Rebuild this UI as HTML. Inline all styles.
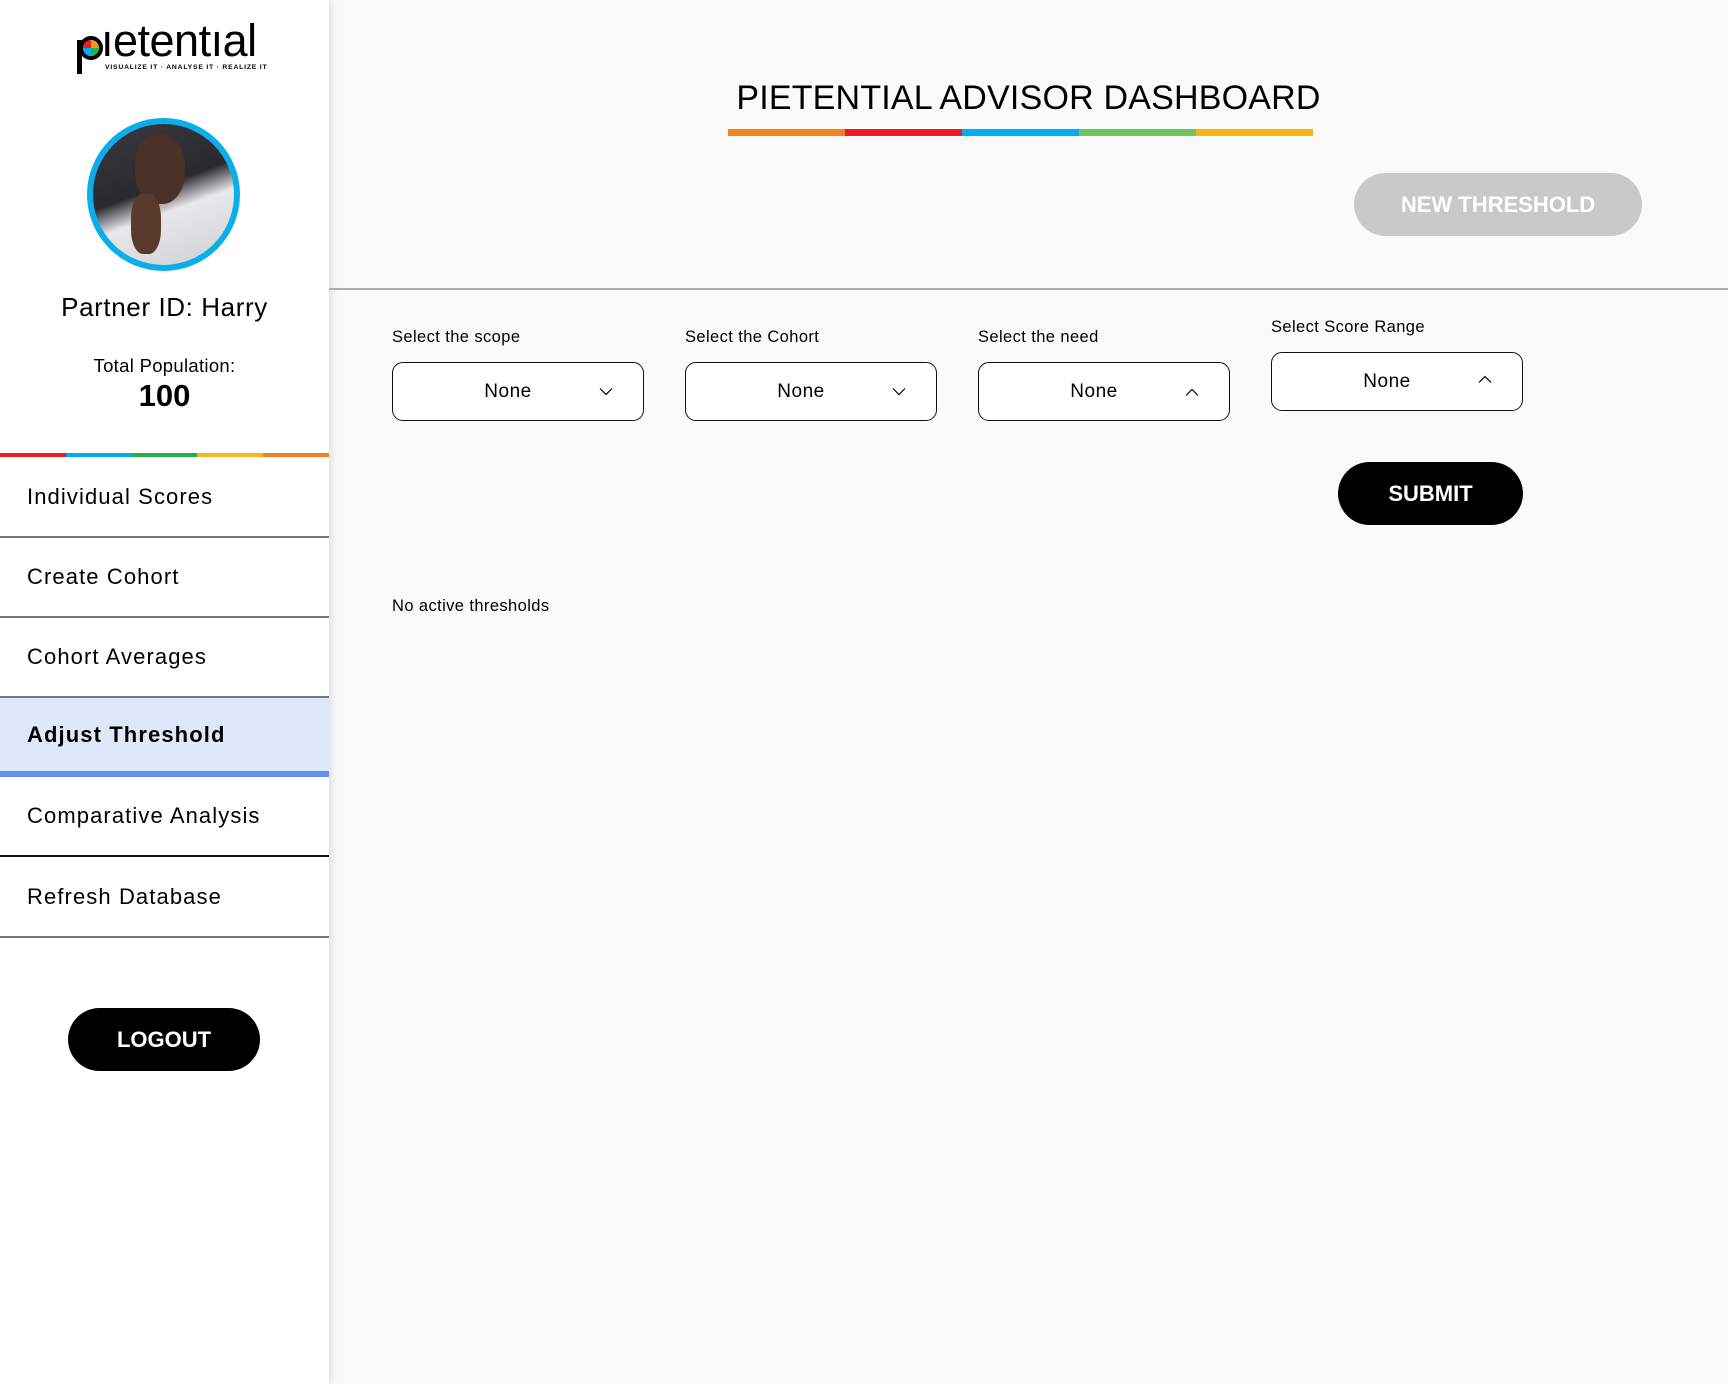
<!DOCTYPE html>
<html><head><meta charset="utf-8"><style>
*{box-sizing:border-box;margin:0;padding:0}
body{width:1728px;height:1384px;background:#fafafa;font-family:"Liberation Sans",sans-serif;color:#000;position:relative;overflow:hidden}
.sb{position:absolute;left:0;top:0;width:329px;height:1384px;background:#fff;box-shadow:2px 0 8px rgba(0,0,0,.12)}
.abs{position:absolute}
.item{position:absolute;left:0;width:329px;font-size:22px;letter-spacing:1.1px;padding-left:27px;display:flex;align-items:center;border-bottom:2px solid #7a7a7a}
.lbl{position:absolute;font-size:16.5px;letter-spacing:.4px}
.dd{position:absolute;width:252px;height:59px;border:1.5px solid #111;border-radius:11px;background:#fff;font-size:19px;letter-spacing:.5px}
.dd span{position:absolute;left:0;width:230px;text-align:center;top:50%;transform:translateY(-50%)}
.dd svg{position:absolute;right:30px;top:50%;transform:translateY(-50%)}
.btn{position:absolute;border-radius:40px;display:flex;align-items:center;justify-content:center;font-weight:bold;font-size:22px}
</style></head><body>
<div class="sb">
  <div class="abs" style="left:77px;top:24px;width:180px;height:50px">
    <svg width="26" height="46" viewBox="0 0 26 46" style="position:absolute;left:0;top:4px">
      <rect x="0" y="12" width="5" height="34" fill="#000"/>
      <circle cx="14" cy="20" r="10" fill="none" stroke="#000" stroke-width="4"/>
      <path d="M14 20L14 12A8 8 0 0 1 22 20Z" fill="#f7941d"/><path d="M14 20L22 20A8 8 0 0 1 14 28Z" fill="#22b14c"/><path d="M14 20L14 28A8 8 0 0 1 6 20Z" fill="#00aeef"/><path d="M14 20L6 20A8 8 0 0 1 14 12Z" fill="#ed1c24"/>
    </svg>
    <div class="abs" style="left:24px;top:-9px;font-size:45px;letter-spacing:-.5px">ıetentıal</div>
    <div class="abs" style="left:28px;top:40px;font-size:6.8px;font-weight:bold;letter-spacing:.8px;white-space:nowrap">VISUALIZE IT · ANALYSE IT · REALIZE IT</div>
  </div>
  <div class="abs" style="left:87px;top:118px;width:153px;height:153px;border-radius:50%;border:6px solid #0aaeea;background:linear-gradient(160deg,#3a3940 0%,#2a292e 45%,#e8e8ea 60%,#cfcfd3 100%);overflow:hidden">
    <div class="abs" style="left:42px;top:10px;width:50px;height:70px;border-radius:45%;background:#4a3026"></div>
    <div class="abs" style="left:38px;top:70px;width:30px;height:60px;border-radius:40%;background:#5a3a2c"></div>
  </div>
  <div class="abs" style="left:0;width:329px;top:292px;text-align:center;font-size:26px;letter-spacing:.6px">Partner ID: Harry</div>
  <div class="abs" style="left:0;width:329px;top:355px;text-align:center;font-size:18.5px;letter-spacing:.3px">Total Population:</div>
  <div class="abs" style="left:0;width:329px;top:378px;text-align:center;font-size:31px;font-weight:bold">100</div>
  <div class="abs" style="left:0;top:453px;width:329px;height:4px;display:flex"><i style="flex:1;background:#ed1c24"></i><i style="flex:1;background:#00aeef"></i><i style="flex:1;background:#22b14c"></i><i style="flex:1;background:#f8b616"></i><i style="flex:1;background:#f58220"></i></div>
  <div class="item" style="top:457px;height:81px">Individual Scores</div>
  <div class="item" style="top:538px;height:80px">Create Cohort</div>
  <div class="item" style="top:618px;height:80px">Cohort Averages</div>
  <div class="item" style="top:698px;height:79px;background:#dfe8fb;font-weight:bold;border-bottom:6px solid #638ff0">Adjust Threshold</div>
  <div class="item" style="top:777px;height:80px;border-bottom-color:#111">Comparative Analysis</div>
  <div class="item" style="top:857px;height:81px">Refresh Database</div>
  <div class="btn" style="left:68px;top:1008px;width:192px;height:63px;background:#000;color:#fff">LOGOUT</div>
</div>
<div class="abs" style="left:329px;width:1399px;top:79px;text-align:center;font-size:34px;letter-spacing:.2px">PIETENTIAL ADVISOR DASHBOARD</div>
<div class="abs" style="left:728px;top:129px;width:585px;height:7px;display:flex"><i style="flex:1;background:#f58220"></i><i style="flex:1;background:#ed1c24"></i><i style="flex:1;background:#00aeef"></i><i style="flex:1;background:#6cc763"></i><i style="flex:1;background:#f8b616"></i></div>
<div class="btn" style="left:1354px;top:173px;width:288px;height:63px;background:#c9c9c9;color:#fff">NEW THRESHOLD</div>
<div class="abs" style="left:329px;top:288px;width:1399px;height:2px;background:#b0b0b0"></div>
<div class="lbl" style="left:392px;top:328px">Select the scope</div>
<div class="lbl" style="left:685px;top:328px">Select the Cohort</div>
<div class="lbl" style="left:978px;top:328px">Select the need</div>
<div class="lbl" style="left:1271px;top:318px">Select Score Range</div>
<div class="dd" style="left:392px;top:362px"><span>None</span><svg width="14" height="9" viewBox="0 0 14 9"><path d="M1 1l6 6 6-6" fill="none" stroke="#000" stroke-width="1.2"/></svg></div>
<div class="dd" style="left:685px;top:362px"><span>None</span><svg width="14" height="9" viewBox="0 0 14 9"><path d="M1 1l6 6 6-6" fill="none" stroke="#000" stroke-width="1.2"/></svg></div>
<div class="dd" style="left:978px;top:362px"><span>None</span><svg width="14" height="9" viewBox="0 0 14 9"><path d="M1 8l6-6 6 6" fill="none" stroke="#000" stroke-width="1.2"/></svg></div>
<div class="dd" style="left:1271px;top:352px"><span>None</span><svg width="14" height="9" viewBox="0 0 14 9" style="margin-top:-3px"><path d="M1 8l6-6 6 6" fill="none" stroke="#000" stroke-width="1.2"/></svg></div>
<div class="btn" style="left:1338px;top:462px;width:185px;height:63px;background:#000;color:#fff">SUBMIT</div>
<div class="abs" style="left:392px;top:597px;font-size:16.5px;letter-spacing:.4px">No active thresholds</div>
</body></html>
